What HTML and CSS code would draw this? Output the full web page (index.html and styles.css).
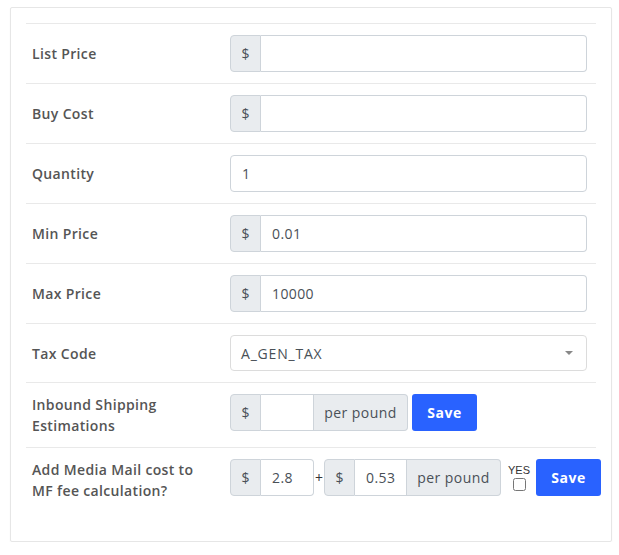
FILE: index.html
```html
<!DOCTYPE html>
<html lang="en">
<head>
    <meta charset="UTF-8">
    <meta name="viewport" content="width=device-width, initial-scale=1.0">
    <title>Pricing Settings</title>
    <link rel="stylesheet" href="styles.css">
</head>
<body>
    <div class="card">
        <div class="settings">
            <div class="row">
                <div class="label">List Price</div>
                <div class="field">
                    <div class="input-group">
                        <span class="addon">$</span>
                        <input class="control" type="text" value="">
                    </div>
                </div>
            </div>

            <div class="row">
                <div class="label">Buy Cost</div>
                <div class="field">
                    <div class="input-group">
                        <span class="addon">$</span>
                        <input class="control" type="text" value="">
                    </div>
                </div>
            </div>

            <div class="row">
                <div class="label">Quantity</div>
                <div class="field">
                    <input class="control solo" type="text" value="1">
                </div>
            </div>

            <div class="row">
                <div class="label">Min Price</div>
                <div class="field">
                    <div class="input-group">
                        <span class="addon">$</span>
                        <input class="control" type="text" value="0.01">
                    </div>
                </div>
            </div>

            <div class="row">
                <div class="label">Max Price</div>
                <div class="field">
                    <div class="input-group">
                        <span class="addon">$</span>
                        <input class="control" type="text" value="10000">
                    </div>
                </div>
            </div>

            <div class="row">
                <div class="label">Tax Code</div>
                <div class="field">
                    <div class="select">
                        <span>A_GEN_TAX</span>
                        <span class="caret"></span>
                    </div>
                </div>
            </div>

            <div class="row">
                <div class="label">Inbound Shipping<br>Estimations</div>
                <div class="field inline">
                    <div class="input-group short">
                        <span class="addon">$</span>
                        <input class="control" type="text" value="">
                        <span class="addon unit">per pound</span>
                    </div>
                    <button class="btn-save">Save</button>
                </div>
            </div>

            <div class="row last">
                <div class="label">Add Media Mail cost to<br>MF fee calculation?</div>
                <div class="field inline">
                    <div class="input-group short">
                        <span class="addon">$</span>
                        <input class="control" type="text" value="2.8">
                    </div>
                    <span class="plus">+</span>
                    <div class="input-group short">
                        <span class="addon">$</span>
                        <input class="control narrow" type="text" value="0.53">
                        <span class="addon unit">per pound</span>
                    </div>
                    <label class="yes">
                        YES
                        <input type="checkbox">
                    </label>
                    <button class="btn-save">Save</button>
                </div>
            </div>
        </div>
    </div>
</body>
</html>
```

FILE: styles.css
```css
body {
    margin: 0;
    padding: 7px 8px 0 10px;
    background: #fff;
    font-family: "Open Sans", "Noto Sans", sans-serif;
    font-size: 14px;
    color: #495057;
}
.card {
    width: 602px;
    box-sizing: border-box;
    border: 1px solid #e6e6e6;
    border-radius: 2px;
    box-shadow: 0 1px 2px rgba(0,0,0,0.04);
    padding: 15px 15px 29px 15px;
    background: #fff;
}
.row {
    display: grid;
    grid-template-columns: 198px 1fr;
    align-items: center;
    border-top: 1px solid #e9e9e9;
}
.label {
    padding: 11px 6px;
    font-weight: 600;
    color: #555;
    line-height: 21px;
    letter-spacing: 0.35px;
}
.field {
    align-self: start;
    padding: 11px 9px 11px 6px;
    display: flex;
    align-items: center;
}
.input-group {
    display: flex;
    flex: 1;
    height: 37px;
}
.input-group.short {
    flex: none;
}
.addon {
    display: flex;
    align-items: center;
    justify-content: center;
    width: 31px;
    box-sizing: border-box;
    background: #e9ecef;
    border: 1px solid #ced4da;
    border-radius: 4px 0 0 4px;
    color: #495057;
    font-size: 14px;
}
.addon.unit {
    width: 94px;
    border-left: none;
    border-radius: 0 4px 4px 0;
    letter-spacing: 0.45px;
}
.control {
    flex: 1;
    min-width: 0;
    height: 37px;
    box-sizing: border-box;
    border: 1px solid #ced4da;
    border-left: none;
    border-radius: 0 4px 4px 0;
    padding: 0 11px;
    font-family: inherit;
    font-size: 14px;
    letter-spacing: 0.4px;
    color: #495057;
    background: #fff;
}
.control.solo {
    border-left: 1px solid #ced4da;
    border-radius: 4px;
}
.short .control {
    flex: none;
    width: 53px;
    border-radius: 0 4px 4px 0;
}
.short .control.narrow {
    width: 52px;
}
.short .control:not(:last-child) {
    border-radius: 0;
}
.select {
    flex: 1;
    height: 36px;
    box-sizing: border-box;
    border: 1px solid #dcdcdc;
    border-radius: 4px;
    display: flex;
    align-items: center;
    justify-content: space-between;
    padding: 0 13px 0 10px;
    color: #495057;
    letter-spacing: 0.8px;
}
.caret {
    width: 0;
    height: 0;
    border-left: 4px solid transparent;
    border-right: 4px solid transparent;
    border-top: 4px solid #888;
}
.plus {
    width: 10px;
    text-align: center;
    color: #333;
}
.btn-save {
    margin-left: 4px;
    width: 65px;
    height: 37px;
    border: none;
    border-radius: 3px;
    background: #2962ff;
    color: #fff;
    font-family: inherit;
    font-weight: 700;
    font-size: 14px;
    letter-spacing: 0.5px;
    cursor: pointer;
}
.yes {
    display: flex;
    flex-direction: column;
    align-items: center;
    width: 26px;
    margin: 0 0 0 5px;
    font-family: "Liberation Sans", Arial, sans-serif;
    font-size: 11px;
    color: #333;
    line-height: 12px;
}
.yes input {
    margin: 2px 0 0 0;
    width: 13px;
    height: 13px;
}
.last .field {
    padding-right: 0;
}
```
